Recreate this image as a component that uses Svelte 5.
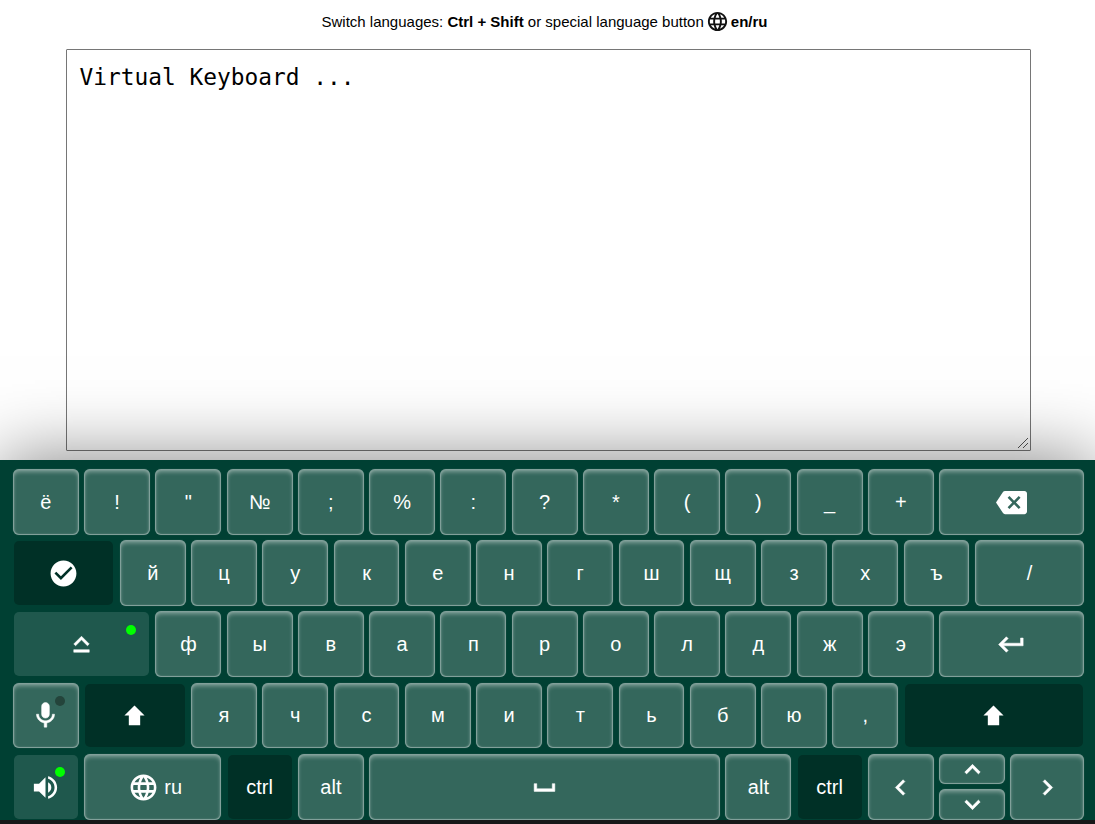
<script>
  const icons = {
    backspace: 'M22 3H7c-.69 0-1.23.35-1.59.88L0 12l5.41 8.11c.36.53.9.89 1.59.89h15c1.1 0 2-.9 2-2V5c0-1.1-.9-2-2-2zm-3 12.59L17.59 17 14 13.41 10.41 17 9 15.59 12.59 12 9 8.41 10.41 7 14 10.59 17.59 7 19 8.41 15.41 12 19 15.59z',
    check: 'M12 2C6.48 2 2 6.48 2 12s4.48 10 10 10 10-4.48 10-10S17.52 2 12 2zm-2 15l-5-5 1.41-1.41L10 14.17l7.59-7.59L19 8l-9 9z',
    caps: 'M12 8.41L16.59 13 18 11.59l-6-6-6 6L7.41 13 12 8.41zM6 18h12v-2H6v2z',
    enter: 'M19 7v4H5.83l3.58-3.59L8 6l-6 6 6 6 1.41-1.41L5.83 13H21V7z',
    mic: 'M12 14c1.66 0 2.99-1.34 2.99-3L15 5c0-1.66-1.34-3-3-3S9 3.34 9 5v6c0 1.66 1.34 3 3 3zm5.3-3c0 3-2.54 5.1-5.3 5.1S6.7 14 6.7 11H5c0 3.41 2.72 6.23 6 6.72V21h2v-3.28c3.28-.48 6-3.3 6-6.72h-1.7z',
    shift: 'M12 4.3L4.2 12H7.6v7.6h8.8V12h3.4L12 4.3z',
    volume: 'M3 9v6h4l5 5V4L7 9H3zm13.5 3c0-1.77-1.02-3.29-2.5-4.03v8.05c1.48-.73 2.5-2.25 2.5-4.02zM14 3.23v2.06c2.89.86 5 3.54 5 6.71s-2.11 5.85-5 6.71v2.06c4.01-.91 7-4.49 7-8.77s-2.99-7.86-7-8.77z',
    globe: 'M11.99 2C6.47 2 2 6.48 2 12s4.47 10 9.99 10C17.52 22 22 17.52 22 12S17.52 2 11.99 2zm6.93 6h-2.95c-.32-1.25-.78-2.45-1.38-3.56 1.84.63 3.37 1.91 4.33 3.56zM12 4.04c.83 1.2 1.48 2.53 1.91 3.96h-3.82c.43-1.43 1.08-2.76 1.91-3.96zM4.26 14C4.1 13.36 4 12.69 4 12s.1-1.36.26-2h3.38c-.08.66-.14 1.32-.14 2s.06 1.34.14 2H4.26zm.82 2h2.95c.32 1.25.78 2.45 1.38 3.56-1.84-.63-3.37-1.9-4.33-3.56zm2.95-8H5.08c.96-1.66 2.49-2.93 4.33-3.56C8.81 5.55 8.35 6.75 8.03 8zM12 19.96c-.83-1.2-1.48-2.53-1.91-3.96h3.82c-.43 1.43-1.08 2.76-1.91 3.96zM14.34 14H9.66c-.09-.66-.16-1.32-.16-2s.07-1.35.16-2h4.68c.09.65.16 1.32.16 2s-.07 1.34-.16 2zm.25 5.56c.6-1.11 1.06-2.31 1.38-3.56h2.95c-.96 1.65-2.49 2.93-4.33 3.56zM16.36 14c.08-.66.14-1.32.14-2s-.06-1.34-.14-2h3.38c.16.64.26 1.31.26 2s-.1 1.36-.26 2h-3.38z',
    space: 'M18 9v4H6V9H4v6h16V9z',
    left: 'M15.41 7.41L14 6l-6 6 6 6 1.41-1.41L10.83 12z',
    right: 'M10 6L8.59 7.41 13.17 12l-4.58 4.59L10 18l6-6z',
    up: 'M12 8l-6 6 1.41 1.41L12 10.83l4.59 4.58L18 14z',
    down: 'M16.59 8.59L12 13.17 7.41 8.59 6 10l6 6 6-6z'
  };
  const bold = ['caps', 'enter', 'mic', 'space', 'left', 'right', 'up', 'down'];

  const chars = (s) => [...s].map((label) => ({ label }));
  const rows = [
    [...chars('ё!"№;%:?*()_+'), { icon: 'backspace', grow: true }],
    [{ icon: 'check', units: 1.5, tone: 'dark' }, ...chars('йцукенгшщзхъ'), { label: '/', grow: true }],
    [{ icon: 'caps', units: 2, tone: 'lit', led: 'on' }, ...chars('фывапролджэ'), { icon: 'enter', grow: true }],
    [{ icon: 'mic', led: 'off' }, { icon: 'shift', units: 1.5, tone: 'dark' }, ...chars('ячсмитьбю,'), { icon: 'shift', tone: 'dark', grow: true }],
    [
      { icon: 'volume', tone: 'lit', led: 'on' },
      { icon: 'globe', label: 'ru', units: 2 },
      { label: 'ctrl', tone: 'dark' },
      { label: 'alt' },
      { icon: 'space', units: 5 },
      { label: 'alt' },
      { label: 'ctrl', tone: 'dark' },
      { icon: 'left' },
      { pair: [{ icon: 'up' }, { icon: 'down' }] },
      { icon: 'right', grow: true }
    ]
  ];
</script>

{#snippet glyph(name, size)}
  <svg class:bold={bold.includes(name)} viewBox="0 0 24 24" width={size} height={size} aria-hidden="true"><path d={icons[name]} /></svg>
{/snippet}

{#snippet keycap(key)}
  <button class="key {key.tone ?? ''}" class:grow={key.grow} class:mixed={key.icon && key.label} style:--units={key.units ?? 1}>
    {#if key.icon}{@render glyph(key.icon, 31)}{/if}
    {#if key.label}<span>{key.label}</span>{/if}
    {#if key.led}<i class="led {key.led}"></i>{/if}
  </button>
{/snippet}

<main>
  <p class="hint">
    <span>Switch languages: <b>Ctrl + Shift</b> or special language button</span>
    {@render glyph('globe', 23)}
    <b>en/ru</b>
  </p>
  <div class="editor">
    <textarea spellcheck="false">Virtual Keyboard ...</textarea>
    <svg class="grip" viewBox="0 0 10 10" width="10" height="10" aria-hidden="true"><path d="M0 10L10 0M5 10l5-5" /></svg>
  </div>
  <section class="keyboard">
    {#each rows as row}
      <div class="row">
        {#each row as key}
          {#if key.pair}
            <div class="pair">
              {#each key.pair as half}{@render keycap(half)}{/each}
            </div>
          {:else}
            {@render keycap(key)}
          {/if}
        {/each}
      </div>
    {/each}
  </section>
</main>

<style>
  :global(body) {
    margin: 0;
    background: #fff;
  }
  main {
    box-sizing: border-box;
    display: flex;
    flex-direction: column;
    align-items: center;
    height: 824px;
    overflow: hidden;
    border-bottom: 4px solid #181818;
    font-family: "Liberation Sans", Arial, sans-serif;
  }
  .hint {
    display: flex;
    align-items: center;
    flex: none;
    height: 43px;
    margin: 0 0 6px;
    padding-right: 6px;
    font-size: 15px;
    color: #000;
    white-space: nowrap;
  }
  .hint svg {
    margin: 0 2px;
    fill: #111;
    stroke: #111;
  }
  .editor {
    position: relative;
    flex: none;
    width: 965px;
    height: 402px;
    margin: 0 0 9px 2px;
  }
  textarea {
    box-sizing: border-box;
    display: block;
    width: 100%;
    height: 100%;
    margin: 0;
    padding: 12px 12.5px;
    border: 1px solid #767676;
    border-radius: 1px;
    background: #fff;
    color: #000;
    font: 22.83px/30px "DejaVu Sans Mono", monospace;
    outline: none;
    resize: none;
  }
  .grip {
    position: absolute;
    right: 3px;
    bottom: 3px;
    fill: none;
    stroke: #555;
  }
  .keyboard {
    position: relative;
    box-sizing: border-box;
    display: flex;
    flex: none;
    flex-direction: column;
    gap: 5.55px;
    width: 100%;
    height: 360px;
    padding: 8.95px 11px 0 12.99px;
    background: #004033;
    box-shadow: 0 0 70px rgba(0, 0, 0, 0.5);
  }
  .row {
    display: flex;
    flex: none;
    gap: 5.454px;
    height: 65.7px;
  }
  .key {
    position: relative;
    box-sizing: border-box;
    display: flex;
    align-items: center;
    justify-content: center;
    flex: none;
    gap: 5px;
    width: calc(var(--units) * 71.25px - 5.45px);
    margin: 0;
    padding: 0.6px 0 0;
    border: 1px solid rgba(255, 255, 255, 0.38);
    border-radius: 6px;
    background: #34675c;
    box-shadow: inset 0 3px 4px -1px rgba(255, 255, 255, 0.36), inset 0 0 2px rgba(255, 255, 255, 0.2), 0 0 1px rgba(255, 255, 255, 0.3);
    color: #fff;
    font: 20px "Liberation Sans", Arial, sans-serif;
  }
  .key svg {
    flex: none;
    fill: #fff;
    stroke: #fff;
  }
  svg:not(.grip) {
    stroke-width: 0;
  }
  svg.bold {
    stroke-width: 0.4;
  }
  .mixed {
    padding-left: 5px;
  }
  .key.grow {
    flex: 1;
  }
  .dark,
  .lit {
    border-color: transparent;
    background-clip: padding-box;
    box-shadow: none;
  }
  .dark {
    background-color: #003026;
  }
  .lit {
    background-color: #1f584d;
  }
  .pair {
    display: flex;
    flex-direction: column;
    gap: 5.2px;
    width: 65.8px;
  }
  .pair .key {
    flex: 1;
    min-height: 0;
    overflow: hidden;
  }
  .led {
    position: absolute;
    top: 12.3px;
    right: 13px;
    width: 10px;
    height: 10px;
    border-radius: 50%;
  }
  .led.on {
    background: #00ff00;
  }
  .led.off {
    background: #24443b;
  }
</style>
